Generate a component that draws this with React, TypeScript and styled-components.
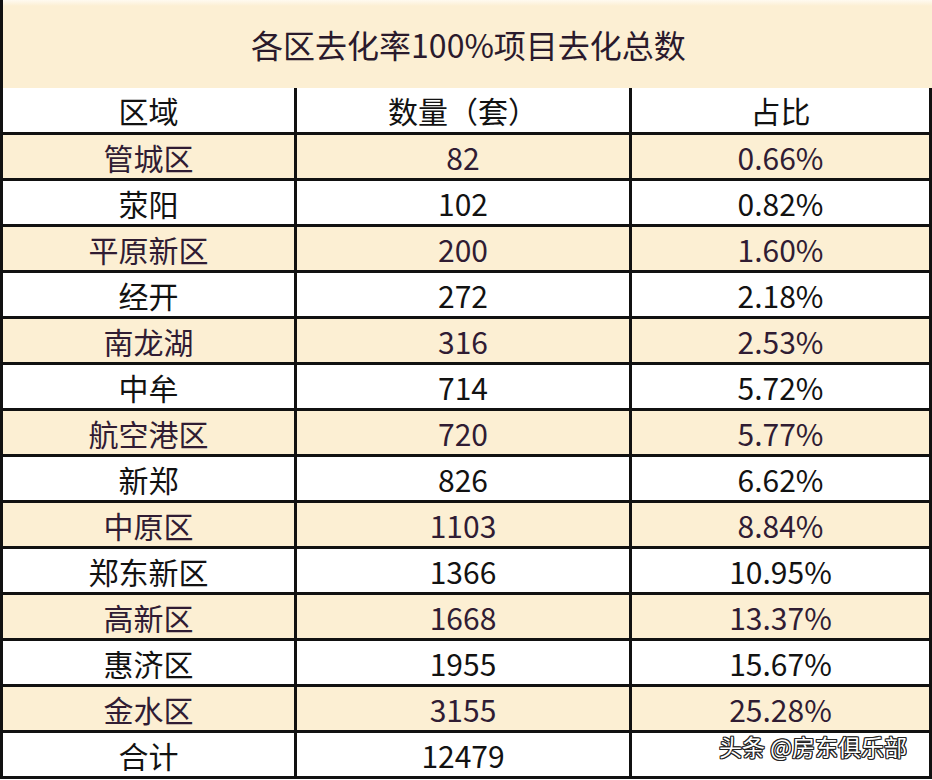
import React from "react";
import styled, { createGlobalStyle } from "styled-components";

const Global = createGlobalStyle`
  html, body { margin: 0; padding: 0; background: #ffffff; }
  body { font-family: "Noto Sans CJK SC", "Noto Sans", sans-serif; }
`;

const Page = styled.div`
  position: relative;
  width: 932px;
  height: 780px;
  overflow: hidden;
  background: #ffffff;
`;

const TitleBand = styled.div`
  height: 88px;
  box-sizing: border-box;
  border-left: 3px solid #111;
  background: linear-gradient(#fffaf0 0px, #fcefd3 6px, #fcefd3 100%);
  display: flex;
  align-items: center;
  justify-content: center;
  padding-left: 2px;
  font-size: 32px;
  color: #2a1a2c;
`;

const Grid = styled.div`
  display: grid;
  grid-template-columns: 291px 332px 297px;
  column-gap: 3px;
  row-gap: 3px;
  padding: 0 3px 3px 3px;
  background: #111;
`;

const Cell = styled.div<{ $tone: "head" | "band" | "plain" }>`
  height: ${(p) => (p.$tone === "head" ? "44px" : "43px")};
  display: flex;
  align-items: center;
  justify-content: center;
  font-size: 30px;
  line-height: 1;
  background: ${(p) => (p.$tone === "band" ? "#fcefd3" : "#ffffff")};
  color: ${(p) => (p.$tone === "band" ? "#301c33" : "#121212")};
`;

const Watermark = styled.div`
  position: absolute;
  left: 719px;
  top: 735px;
  font-size: 23px;
  line-height: 1;
  color: #ffffff;
  white-space: nowrap;
  text-shadow:
    1px 1px 0 #222, -1px -1px 0 #222, 1px -1px 0 #222, -1px 1px 0 #222,
    0 1px 0 #222, 1px 0 0 #222, 0 -1px 0 #222, -1px 0 0 #222;
`;

const rows: [string, string, string][] = [
  ["管城区", "82", "0.66%"],
  ["荥阳", "102", "0.82%"],
  ["平原新区", "200", "1.60%"],
  ["经开", "272", "2.18%"],
  ["南龙湖", "316", "2.53%"],
  ["中牟", "714", "5.72%"],
  ["航空港区", "720", "5.77%"],
  ["新郑", "826", "6.62%"],
  ["中原区", "1103", "8.84%"],
  ["郑东新区", "1366", "10.95%"],
  ["高新区", "1668", "13.37%"],
  ["惠济区", "1955", "15.67%"],
  ["金水区", "3155", "25.28%"],
  ["合计", "12479", ""],
];

export default function App() {
  return (
    <Page>
      <Global />
      <TitleBand>各区去化率100%项目去化总数</TitleBand>
      <Grid>
        <Cell $tone="head">区域</Cell>
        <Cell $tone="head">数量（套）</Cell>
        <Cell $tone="head">占比</Cell>
        {rows.map((r, i) => {
          const tone = i % 2 === 0 && i < 13 ? "band" : "plain";
          return (
            <React.Fragment key={r[0]}>
              <Cell $tone={tone}>{r[0]}</Cell>
              <Cell $tone={tone}>{r[1]}</Cell>
              <Cell $tone={tone}>{r[2]}</Cell>
            </React.Fragment>
          );
        })}
      </Grid>
      <Watermark>头条 @房东俱乐部</Watermark>
    </Page>
  );
}
